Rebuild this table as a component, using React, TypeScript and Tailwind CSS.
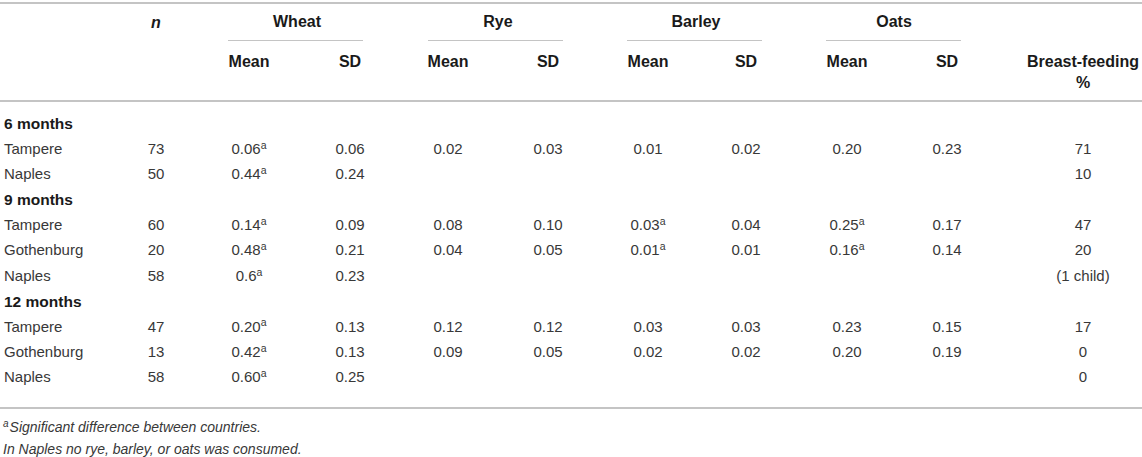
import React from "react";

const COLS =
  "grid grid-cols-[116px_80px_106px_96px_100px_100px_100px_96px_106px_94px_148px]";

type Cell = string | [string, boolean];

const rows: Array<{ group?: string; label?: string; n?: string; v?: Cell[]; bf?: string }> = [
  { group: "6 months" },
  { label: "Tampere", n: "73", v: [["0.06", true], "0.06", "0.02", "0.03", "0.01", "0.02", "0.20", "0.23"], bf: "71" },
  { label: "Naples", n: "50", v: [["0.44", true], "0.24", "", "", "", "", "", ""], bf: "10" },
  { group: "9 months" },
  { label: "Tampere", n: "60", v: [["0.14", true], "0.09", "0.08", "0.10", ["0.03", true], "0.04", ["0.25", true], "0.17"], bf: "47" },
  { label: "Gothenburg", n: "20", v: [["0.48", true], "0.21", "0.04", "0.05", ["0.01", true], "0.01", ["0.16", true], "0.14"], bf: "20" },
  { label: "Naples", n: "58", v: [["0.6", true], "0.23", "", "", "", "", "", ""], bf: "(1 child)" },
  { group: "12 months" },
  { label: "Tampere", n: "47", v: [["0.20", true], "0.13", "0.12", "0.12", "0.03", "0.03", "0.23", "0.15"], bf: "17" },
  { label: "Gothenburg", n: "13", v: [["0.42", true], "0.13", "0.09", "0.05", "0.02", "0.02", "0.20", "0.19"], bf: "0" },
  { label: "Naples", n: "58", v: [["0.60", true], "0.25", "", "", "", "", "", ""], bf: "0" },
];

function Val({ c }: { c: Cell }) {
  const [t, sup] = typeof c === "string" ? [c, false] : c;
  return (
    <div className="text-center">
      {t}
      {sup && <sup className="text-[10.5px] top-[-0.5em]">a</sup>}
    </div>
  );
}

function Group({ name, ml }: { name: string; ml: string }) {
  return (
    <div className="col-span-2 flex flex-col h-[37px]">
      <div className="flex-1 flex items-center justify-center font-bold text-[16px] text-[#1a1a1a]">{name}</div>
      <div className={`h-px bg-[#c4c4c4] w-[135px] ${ml}`} />
    </div>
  );
}

export default function App() {
  return (
    <div
      className="w-[1142px] h-[457px] overflow-hidden bg-white text-[15px] text-[#383838]"
      style={{ fontFamily: '"Liberation Sans", Arial, sans-serif' }}
    >
      <div className="pt-[2px]">
        <div className="border-t-2 border-[#c4c4c4]" />
        {/* header */}
        <div className="border-b-2 border-[#c4c4c4]">
          <div className={COLS}>
            <div />
            <div className="flex items-center justify-center h-[37px] font-bold italic text-[16px] text-[#1a1a1a]">n</div>
            <Group name="Wheat" ml="ml-[32px]" />
            <Group name="Rye" ml="ml-[30px]" />
            <Group name="Barley" ml="ml-[29px]" />
            <Group name="Oats" ml="ml-[32px]" />
            <div />
          </div>
          <div className={`${COLS} h-[59px] pt-[10px] leading-[21px] font-bold text-[16px] text-[#1a1a1a]`}>
            <div />
            <div />
            <div className="text-center">Mean</div>
            <div className="text-center">SD</div>
            <div className="text-center">Mean</div>
            <div className="text-center">SD</div>
            <div className="text-center">Mean</div>
            <div className="text-center">SD</div>
            <div className="text-center">Mean</div>
            <div className="text-center">SD</div>
            <div className="text-center pl-[30px]">
              Breast-feeding
              <br />%
            </div>
          </div>
        </div>
        {/* body */}
        <div className="pt-[9px] pb-[17px] border-b-2 border-[#c4c4c4]">
          {rows.map((r, i) =>
            r.group ? (
              <div key={i} className="h-[25.4px] flex items-center pl-[4px] font-bold text-[15.5px] text-[#1a1a1a]">
                {r.group}
              </div>
            ) : (
              <div key={i} className={`${COLS} h-[25.4px] items-center`}>
                <div className="pl-[4px]">{r.label}</div>
                <div className="text-center">{r.n}</div>
                {r.v!.map((c, j) => (
                  <Val key={j} c={c} />
                ))}
                <div className="text-center pl-[30px]">{r.bf}</div>
              </div>
            )
          )}
        </div>
        <div className="pt-[7px] pl-[3px] italic text-[14px] leading-[22px] text-[#383838]">
          <div>
            <sup className="text-[10px] top-[-0.5em] mr-[1px]">a</sup>Significant difference between countries.
          </div>
          <div>In Naples no rye, barley, or oats was consumed.</div>
        </div>
      </div>
    </div>
  );
}
